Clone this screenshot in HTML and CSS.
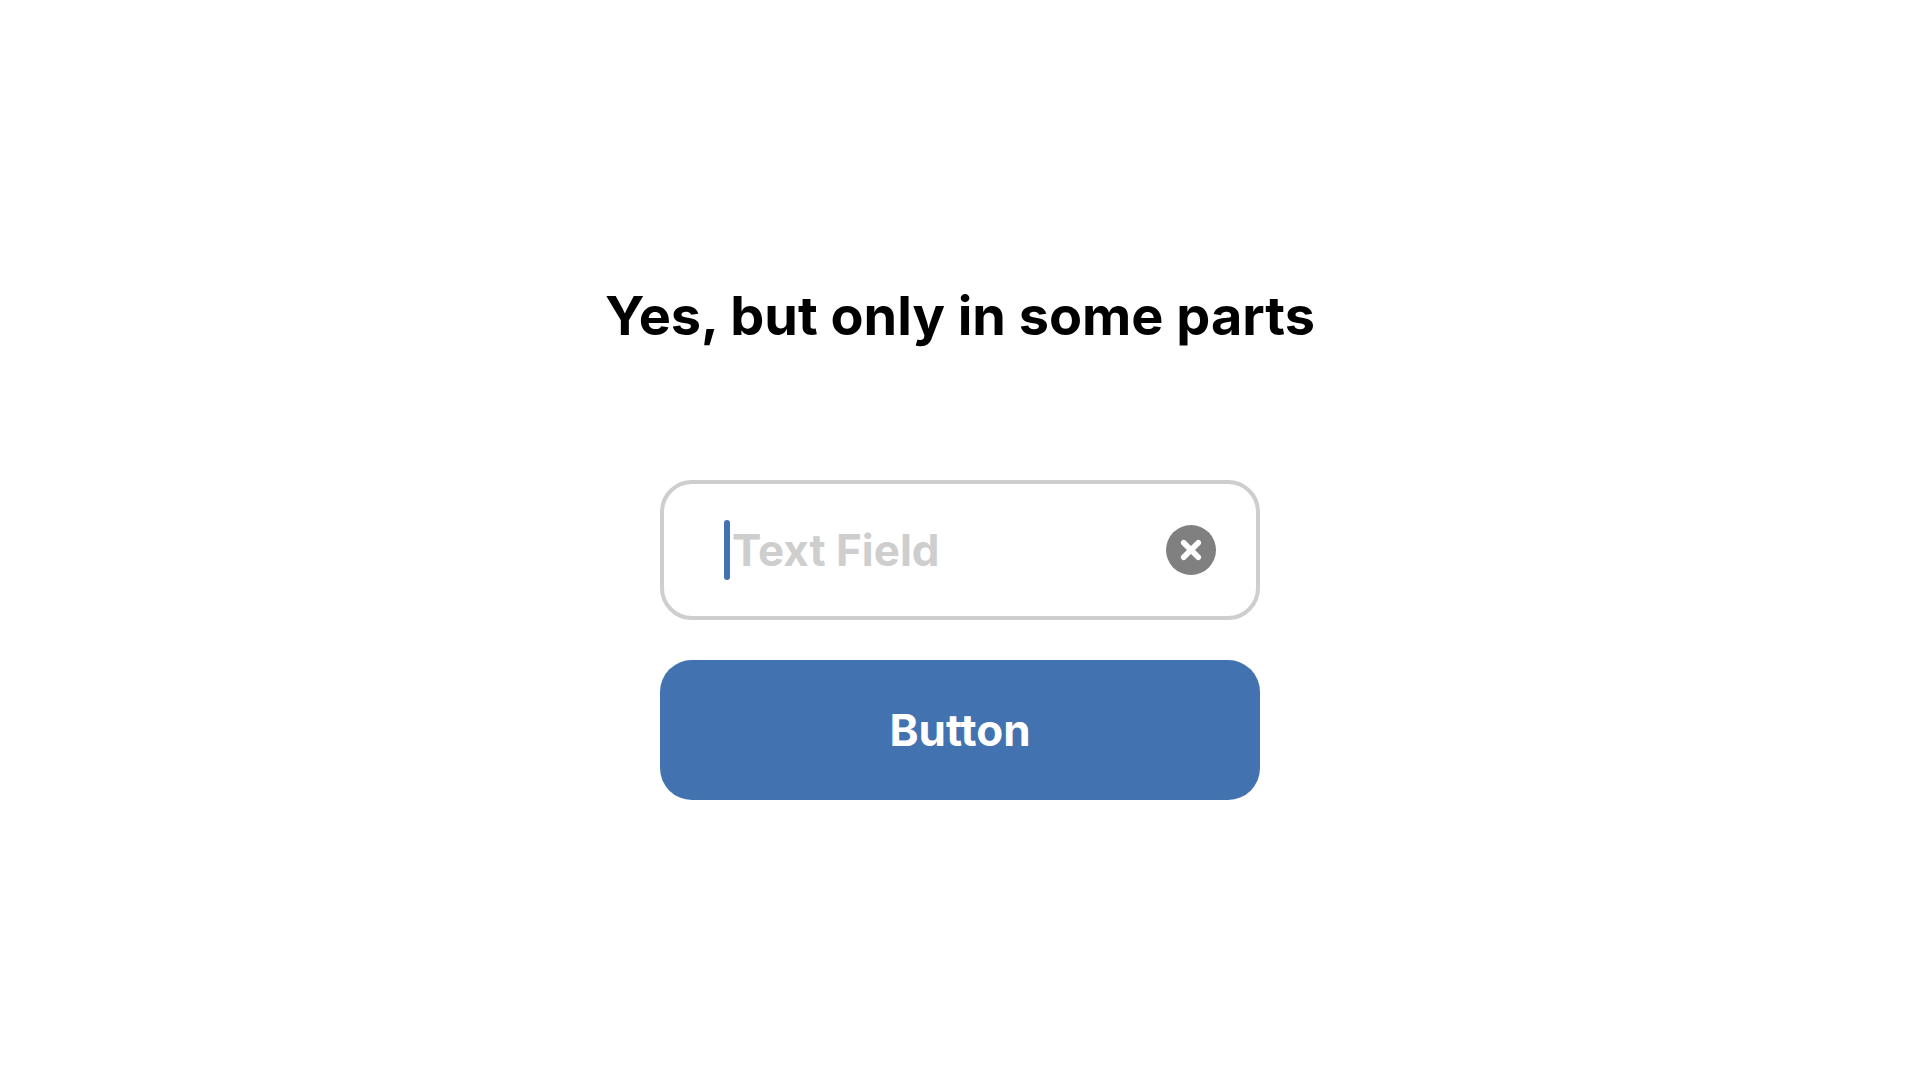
FILE: index.html
```html
<!DOCTYPE html>
<html lang="en">
<head>
  <meta charset="UTF-8" />
  <title>Yes, but only in some parts</title>
  <link rel="stylesheet" href="styles.css">
</head>
<body>
  <main class="container">
    <h1>Yes, but only in some parts</h1>

    <form class="form">
      <div class="field">
        <span class="caret"></span>
        <input type="text" id="textField" placeholder="Text Field" aria-label="Text Field" />
        <button type="reset" class="clear-btn" aria-label="Clear">
          <svg viewBox="0 0 50 50" width="50" height="50">
            <circle cx="25" cy="25" r="25" fill="#808080" />
            <path d="M17.7 17.7 L32.3 32.3 M32.3 17.7 L17.7 32.3" stroke="#fff" stroke-width="5.6" stroke-linecap="round" />
          </svg>
        </button>
      </div>
      <button type="button" class="submit-btn">Button</button>
    </form>
  </main>
</body>
</html>
```

FILE: styles.css
```css
* {
  box-sizing: border-box;
}

body {
  margin: 0;
  min-height: 100vh;
  display: flex;
  justify-content: center;
  align-items: center;
  background-color: #fff;
  font-family: Inter, sans-serif;
}

.container {
  display: flex;
  flex-direction: column;
  align-items: center;
  gap: 128px;
  padding: 20px;
}

h1 {
  margin: 0;
  font-size: 54px;
  line-height: 72px;
  font-weight: bold;
  color: #000;
}

.form {
  display: flex;
  flex-direction: column;
  gap: 40px;
  width: 100%;
  max-width: 600px;
}

.field {
  display: flex;
  align-items: center;
  min-height: 140px;
  padding: 0 40px 0 60px;
  border: 4px solid #cecece;
  border-radius: 32px;
}

.caret {
  width: 6px;
  height: 60px;
  border-radius: 3px;
  background-color: #4272b0;
}

input[type="text"] {
  flex: 1;
  min-width: 0;
  padding: 0 2px;
  border: none;
  outline: none;
  font: bold 44px Inter, sans-serif;
}

input::placeholder {
  color: #cecece;
  opacity: 1;
}

.clear-btn {
  padding: 0;
  border: none;
  background: none;
  cursor: pointer;
}

.clear-btn svg {
  display: block;
}

.submit-btn {
  min-height: 140px;
  border: none;
  border-radius: 32px;
  background-color: #4272b0;
  color: #fff;
  font: bold 44px Inter, sans-serif;
  cursor: pointer;
}
```
